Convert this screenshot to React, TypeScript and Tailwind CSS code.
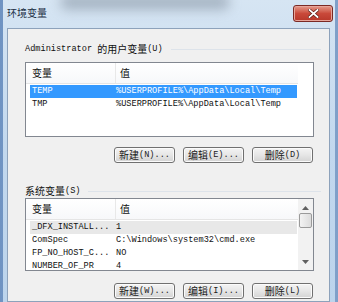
import React from "react";

const mono = "font-['Liberation_Mono','Noto_Sans_CJK_SC',monospace]";
const cjk = "font-['Noto_Sans_CJK_SC',sans-serif]";

function Cj({ children }: { children: React.ReactNode }) {
  return <span className={`${cjk} text-[10px]`}>{children}</span>;
}

function Btn({ cn, tail }: { cn: string; tail: string }) {
  return (
    <button className="flex h-[16px] w-[61px] items-center justify-center rounded-[3px] border border-[#707070] bg-gradient-to-b from-[#f4f4f4] via-[#e6e6e6] to-[#d3d3d3] leading-none text-[#1a1a1a] shadow-[inset_0_0_0_1px_#fbfbfb]">
      <Cj>{cn}</Cj>
      <span className="text-[8.6px]">{tail}</span>
    </button>
  );
}

type Row = { name: string; value: string; sel?: "blue" | "gray" };

function Header() {
  return (
    <div className="flex h-[21px] w-[272px] items-center border-b border-[#e5e5e5] bg-gradient-to-b from-white to-[#f7f8fa] leading-none">
      <div className="flex h-full w-[90px] items-center border-r border-[#e8e8e8] pl-[6px]">
        <Cj>变量</Cj>
      </div>
      <div className="pl-[4px]">
        <Cj>值</Cj>
      </div>
    </div>
  );
}

function Rows({ rows }: { rows: Row[] }) {
  return (
    <div className="mt-[1px] flex flex-col">
      {rows.map((r) => (
        <div
          key={r.name}
          className={`ml-[4px] flex h-[13px] w-[267px] shrink-0 items-center whitespace-nowrap pl-[2px] text-[8.6px] leading-none ${
            r.sel === "blue"
              ? "bg-[#3399ff] text-white"
              : r.sel === "gray"
              ? "bg-[#e8e8e8] text-[#111]"
              : "text-[#111]"
          }`}
        >
          <span className="w-[84px] shrink-0">{r.name}</span>
          <span>{r.value}</span>
        </div>
      ))}
    </div>
  );
}

function Label({ cn, tail }: { cn: React.ReactNode; tail: string }) {
  return (
    <div className="flex h-[12px] items-center pl-[17px] leading-none">
      {cn}
      <span className="text-[8.6px] text-[#111]">{tail}</span>
      <div className="ml-[8px] mr-[8px] h-px flex-1 bg-[#dde3ea]" />
    </div>
  );
}

export default function App() {
  const userRows: Row[] = [
    { name: "TEMP", value: "%USERPROFILE%\\AppData\\Local\\Temp", sel: "blue" },
    { name: "TMP", value: "%USERPROFILE%\\AppData\\Local\\Temp" },
  ];
  const sysRows: Row[] = [
    { name: "_DFX_INSTALL...", value: "1", sel: "gray" },
    { name: "ComSpec", value: "C:\\Windows\\system32\\cmd.exe" },
    { name: "FP_NO_HOST_C...", value: "NO" },
    { name: "NUMBER_OF_PR", value: "4" },
  ];

  return (
    <div
      className={`${mono} relative flex h-[302px] w-[338px] flex-col overflow-hidden bg-gradient-to-r from-[#6f93c2] via-[#c3d9ef] to-[#7f9fc8] text-[#111]`}
    >
      {/* glass tint */}
      <div className="pointer-events-none absolute inset-x-[3px] top-0 h-[302px] bg-gradient-to-b from-[#d6e5f3] via-[#c2d8ee] to-[#bcd4ec]" />
      <div className="pointer-events-none absolute left-[60px] top-[-6px] h-[16px] w-[170px] rounded-full bg-[#6f7c8c]/45 blur-[6px]" />

      {/* title bar */}
      <div className="relative flex h-[28px] shrink-0 items-start">
        <span className={`${cjk} ml-[7px] mt-[8px] text-[10px] leading-none text-[#1c2f45]`}>环境变量</span>
        <div className="ml-auto mr-[5px] mt-[5px] flex h-[17px] w-[40px] items-center justify-center rounded-[3px] border border-[#7b2a25] bg-gradient-to-b from-[#e59a8c] via-[#c9493a] to-[#b8372a] shadow-[inset_0_0_0_1px_#e7a59a]">
          <svg width="11" height="9" viewBox="0 0 11 9">
            <path d="M1.5 1 L9.5 8 M9.5 1 L1.5 8" stroke="#5a1a14" strokeWidth="3.2" strokeLinecap="square" />
            <path d="M1.5 1 L9.5 8 M9.5 1 L1.5 8" stroke="#ffffff" strokeWidth="1.8" strokeLinecap="square" />
          </svg>
        </div>
      </div>

      {/* client area */}
      <div className="relative ml-[7px] mr-[8px] flex flex-1 flex-col border border-[#8da2bb] bg-[#f0f0f0]">
        <div className="mt-[14px]">
          <Label cn={<><span className="text-[8.6px]">Administrator&nbsp;</span><Cj>的用户变量</Cj></>} tail="(U)" />
        </div>

        <div className="ml-[17px] mt-[7px] h-[75px] w-[289px] overflow-hidden border border-[#828790] bg-white">
          <Header />
          <Rows rows={userRows} />
        </div>

        <div className="mt-[10px] flex justify-end gap-[8px] pr-[16px]">
          <Btn cn="新建" tail="(N)..." />
          <Btn cn="编辑" tail="(E)..." />
          <Btn cn="删除" tail="(D)" />
        </div>

        <div className="mt-[22px]">
          <Label cn={<Cj>系统变量</Cj>} tail="(S)" />
        </div>

        <div className="ml-[17px] mt-[1px] flex h-[73px] w-[289px] overflow-hidden border border-[#828790] bg-white">
          <div className="w-[272px] overflow-hidden">
            <Header />
            <Rows rows={sysRows} />
          </div>
          <div className="flex w-[15px] flex-col items-center bg-[#f2f2f2] pt-[7px]">
            <svg width="7" height="4" viewBox="0 0 7 4">
              <path d="M0 4 L3.5 0 L7 4 Z" fill="#606060" />
            </svg>
            <div className="mt-[3px] h-[15px] w-[13px] rounded-[2px] border border-[#9a9a9a] bg-gradient-to-r from-[#f3f3f3] to-[#dcdcdc]" />
            <div className="flex-1" />
            <svg width="7" height="4" viewBox="0 0 7 4" className="mb-[6px]">
              <path d="M0 0 L3.5 4 L7 0 Z" fill="#606060" />
            </svg>
          </div>
        </div>

        <div className="mt-[12px] flex justify-end gap-[8px] pr-[16px]">
          <Btn cn="新建" tail="(W)..." />
          <Btn cn="编辑" tail="(I)..." />
          <Btn cn="删除" tail="(L)" />
        </div>
      </div>
    </div>
  );
}
